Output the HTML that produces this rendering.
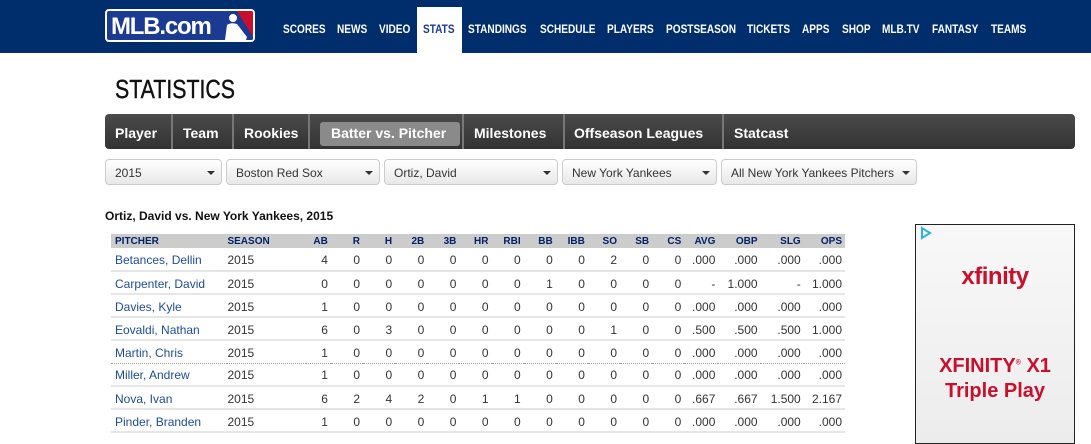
<!DOCTYPE html>
<html><head><meta charset="utf-8">
<style>
*{margin:0;padding:0;box-sizing:border-box}
body{width:1091px;height:438px;overflow:hidden;background:#fff;font-family:"Liberation Sans",Arial,sans-serif;position:relative}
.hdr{position:absolute;left:0;top:0;width:1091px;height:53px;background:#002d6c}
.nav{position:absolute;top:22px;color:#fff;font-weight:bold;font-size:12px;white-space:nowrap;transform:scaleX(.84);transform-origin:left top}
.stab{position:absolute;left:417px;top:7px;width:45px;height:46px;background:#fff}
.logo{position:absolute;left:105px;top:9px;width:150px;height:33px;border:2px solid #fff;border-radius:4px;background:#1b3b93;overflow:hidden}
.logo .t{position:absolute;left:4px;top:2px;color:#fff;font-weight:bold;font-size:24px;letter-spacing:-1.2px}
.title{position:absolute;left:115px;top:74px;font-size:26px;color:#111;transform:scaleX(.82);transform-origin:left top;-webkit-text-stroke:0.4px #111}
.bar{position:absolute;left:105px;top:114px;width:970px;height:35px;border-radius:4px;background:linear-gradient(#4a4a4a,#333)}
.tb{position:absolute;top:11px;color:#fff;font-weight:bold;font-size:14px;white-space:nowrap}
.sep{position:absolute;top:0;width:2px;height:35px;background:#777}
.act{position:absolute;left:215px;top:8px;width:140px;height:24px;border-radius:3px;background:#8a8a8a}
.dd{position:absolute;top:159px;height:26px;border:1px solid #ccc;border-radius:4px;background:linear-gradient(#fff,#e8e8e8);font-size:12px;color:#333;padding:6px 0 0 9px;white-space:nowrap}
.dd:after{content:"";position:absolute;right:6px;top:11px;border:4px solid transparent;border-top:4px solid #333;border-bottom:0}
.sub{position:absolute;left:105px;top:209px;font-size:12px;font-weight:bold;color:#111}
table{position:absolute;left:111px;top:234px;width:734px;border-collapse:collapse;font-size:12px}
th{background:#ccc;color:#002266;font-size:10px;height:14px;text-align:right;padding:0 3px 0 0;font-weight:bold}
td{height:23px;padding-top:2px;text-align:right;color:#333;border-bottom:2px solid #e6e6e6;padding-right:3px}
td:first-child,th:first-child{text-align:left;padding-left:4px}
td:first-child{color:#1f4c99}
td:nth-child(2),th:nth-child(2){text-align:left;padding-left:0}
tr.dot td{border-bottom:1px dotted #999}
.ad{position:absolute;left:915px;top:224px;width:160px;height:220px;border:1px solid #222;background:linear-gradient(#f8f8f8,#ececec)}
.ad .x{position:absolute;left:0;width:158px;text-align:center;color:#c8102e;font-weight:bold}
</style></head><body>
<div class="hdr"></div>
<div class="logo"><span class="t">MLB.com</span>
<svg style="position:absolute;left:110px;top:0" width="38" height="29"><rect x="0" y="0" width="38" height="29" fill="#c8102e"/><path d="M0 0H20L38 29H0Z" fill="#1b3b93"/><circle cx="16" cy="7" r="4" fill="#fff"/><path d="M8 29L10 14Q14 11 20 13L30 26L29 29Z" fill="#fff"/></svg></div>
<div class="stab"></div>
<span class="nav" style="left:283px">SCORES</span>
<span class="nav" style="left:337px">NEWS</span>
<span class="nav" style="left:379px">VIDEO</span>
<span class="nav" style="left:423px;color:#1b3b93">STATS</span>
<span class="nav" style="left:468px">STANDINGS</span>
<span class="nav" style="left:540px">SCHEDULE</span>
<span class="nav" style="left:607px">PLAYERS</span>
<span class="nav" style="left:666px">POSTSEASON</span>
<span class="nav" style="left:747px">TICKETS</span>
<span class="nav" style="left:802px">APPS</span>
<span class="nav" style="left:842px">SHOP</span>
<span class="nav" style="left:882px">MLB.TV</span>
<span class="nav" style="left:932px">FANTASY</span>
<span class="nav" style="left:991px">TEAMS</span>
<div class="title">STATISTICS</div>
<div class="bar">
<div class="act"></div>
<span class="tb" style="left:10px">Player</span><div class="sep" style="left:66px"></div>
<span class="tb" style="left:78px">Team</span><div class="sep" style="left:127px"></div>
<span class="tb" style="left:139px">Rookies</span><div class="sep" style="left:203px"></div>
<span class="tb" style="left:226px">Batter vs. Pitcher</span><div class="sep" style="left:357px"></div>
<span class="tb" style="left:369px">Milestones</span><div class="sep" style="left:458px"></div>
<span class="tb" style="left:469px">Offseason Leagues</span><div class="sep" style="left:617px"></div>
<span class="tb" style="left:629px">Statcast</span>
</div>
<div class="dd" style="left:105px;width:117px">2015</div>
<div class="dd" style="left:226px;width:154px">Boston Red Sox</div>
<div class="dd" style="left:384px;width:174px">Ortiz, David</div>
<div class="dd" style="left:562px;width:155px">New York Yankees</div>
<div class="dd" style="left:721px;width:196px">All New York Yankees Pitchers</div>
<div class="sub">Ortiz, David vs. New York Yankees, 2015</div>
<table>
<colgroup><col style="width:116px"><col style="width:78px"><col style="width:25px"><col style="width:32px"><col style="width:32px"><col style="width:32px"><col style="width:32px"><col style="width:32px"><col style="width:32px"><col style="width:32px"><col style="width:32px"><col style="width:32px"><col style="width:32px"><col style="width:32px"><col style="width:34px"><col style="width:42px"><col style="width:43px"><col style="width:41px"></colgroup>
<tr><th>PITCHER</th><th>SEASON</th><th>AB</th><th>R</th><th>H</th><th>2B</th><th>3B</th><th>HR</th><th>RBI</th><th>BB</th><th>IBB</th><th>SO</th><th>SB</th><th>CS</th><th>AVG</th><th>OBP</th><th>SLG</th><th>OPS</th></tr>
<tr><td>Betances, Dellin</td><td>2015</td><td>4</td><td>0</td><td>0</td><td>0</td><td>0</td><td>0</td><td>0</td><td>0</td><td>0</td><td>2</td><td>0</td><td>0</td><td>.000</td><td>.000</td><td>.000</td><td>.000</td></tr>
<tr><td>Carpenter, David</td><td>2015</td><td>0</td><td>0</td><td>0</td><td>0</td><td>0</td><td>0</td><td>0</td><td>1</td><td>0</td><td>0</td><td>0</td><td>0</td><td>-</td><td>1.000</td><td>-</td><td>1.000</td></tr>
<tr><td>Davies, Kyle</td><td>2015</td><td>1</td><td>0</td><td>0</td><td>0</td><td>0</td><td>0</td><td>0</td><td>0</td><td>0</td><td>0</td><td>0</td><td>0</td><td>.000</td><td>.000</td><td>.000</td><td>.000</td></tr>
<tr><td>Eovaldi, Nathan</td><td>2015</td><td>6</td><td>0</td><td>3</td><td>0</td><td>0</td><td>0</td><td>0</td><td>0</td><td>0</td><td>1</td><td>0</td><td>0</td><td>.500</td><td>.500</td><td>.500</td><td>1.000</td></tr>
<tr class="dot"><td>Martin, Chris</td><td>2015</td><td>1</td><td>0</td><td>0</td><td>0</td><td>0</td><td>0</td><td>0</td><td>0</td><td>0</td><td>0</td><td>0</td><td>0</td><td>.000</td><td>.000</td><td>.000</td><td>.000</td></tr>
<tr><td>Miller, Andrew</td><td>2015</td><td>1</td><td>0</td><td>0</td><td>0</td><td>0</td><td>0</td><td>0</td><td>0</td><td>0</td><td>0</td><td>0</td><td>0</td><td>.000</td><td>.000</td><td>.000</td><td>.000</td></tr>
<tr><td>Nova, Ivan</td><td>2015</td><td>6</td><td>2</td><td>4</td><td>2</td><td>0</td><td>1</td><td>1</td><td>0</td><td>0</td><td>0</td><td>0</td><td>0</td><td>.667</td><td>.667</td><td>1.500</td><td>2.167</td></tr>
<tr><td>Pinder, Branden</td><td>2015</td><td>1</td><td>0</td><td>0</td><td>0</td><td>0</td><td>0</td><td>0</td><td>0</td><td>0</td><td>0</td><td>0</td><td>0</td><td>.000</td><td>.000</td><td>.000</td><td>.000</td></tr>
</table>
<div class="ad">
<svg style="position:absolute;left:3px;top:1px" width="14" height="14"><path d="M3 2V12L11 7Z" fill="none" stroke="#2bb3d9" stroke-width="2"/></svg>
<div class="x" style="top:38px;font-size:24px;letter-spacing:-0.5px">xfinity</div>
<div class="x" style="top:130px;font-size:20px">XFINITY<sup style="font-size:7px">®</sup> X1</div>
<div class="x" style="top:155px;font-size:20px">Triple Play</div>
</div>
</body></html>
